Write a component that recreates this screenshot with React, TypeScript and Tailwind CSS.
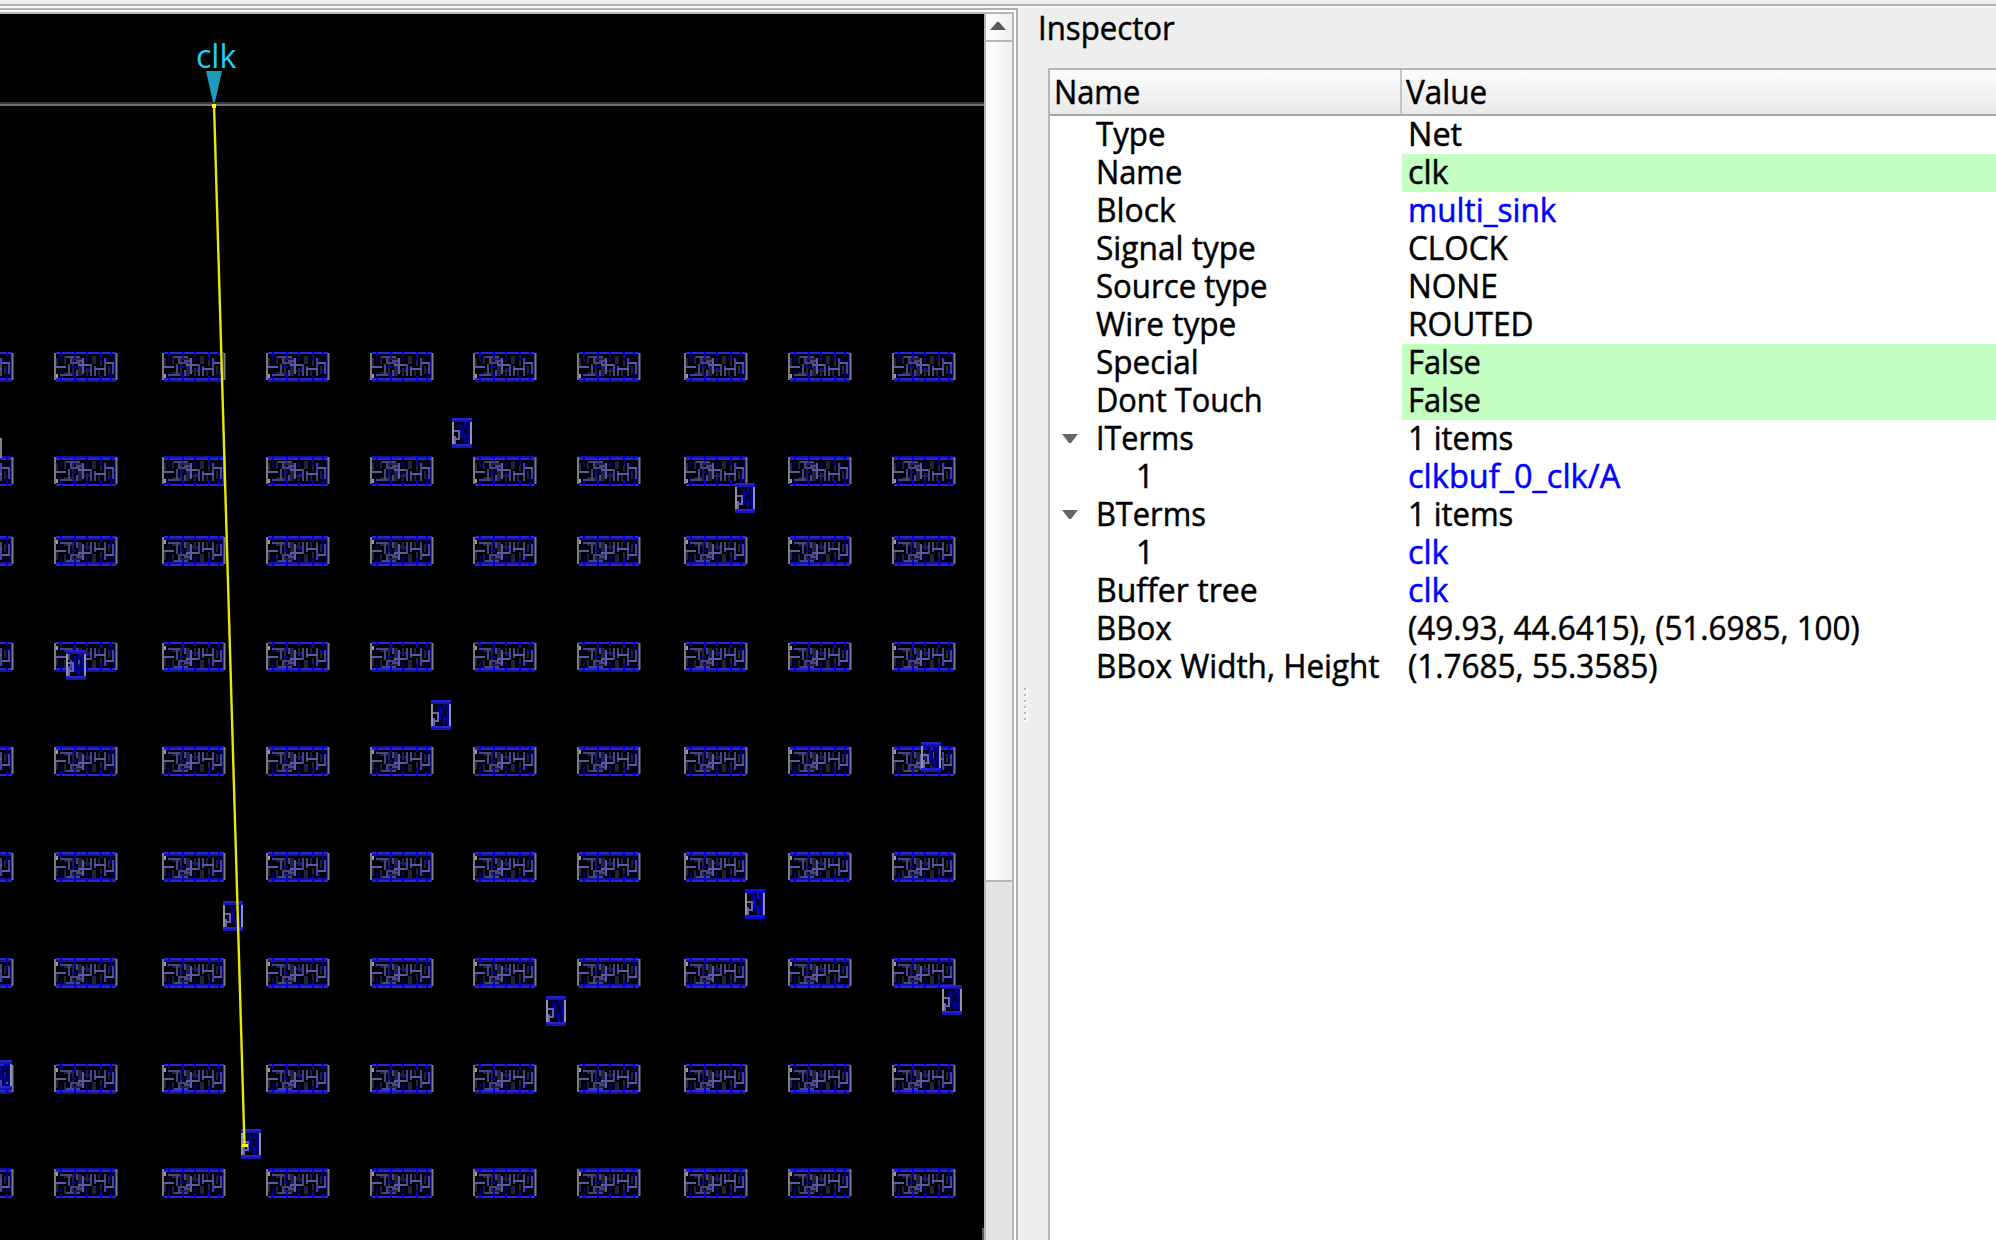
import { useLayoutEffect, useRef, useState } from "react";

type FitProps = { text: string; width: number; className?: string };

/** Single-line label condensed horizontally to a given width. */
function Fit({ text, width, className = "" }: FitProps) {
  const ref = useRef<HTMLSpanElement>(null);
  const [scale, setScale] = useState(1);
  useLayoutEffect(() => {
    if (ref.current) setScale(width / ref.current.offsetWidth);
  }, [width]);
  return (
    <span
      ref={ref}
      className={"inline-block origin-left whitespace-pre " + className}
      style={{ transform: `scaleX(${scale})` }}
    >
      {text}
    </span>
  );
}

type Row = {
  name: string;
  nw: number;
  value: string;
  vw: number;
  kind?: "edit" | "link";
  open?: boolean;
  child?: boolean;
};

const ROWS: Row[] = [
  { name: "Type", nw: 69, value: "Net", vw: 54 },
  { name: "Name", nw: 86, value: "clk", vw: 40, kind: "edit" },
  { name: "Block", nw: 80, value: "multi_sink", vw: 148, kind: "link" },
  { name: "Signal type", nw: 160, value: "CLOCK", vw: 100 },
  { name: "Source type", nw: 172, value: "NONE", vw: 90 },
  { name: "Wire type", nw: 140, value: "ROUTED", vw: 126 },
  { name: "Special", nw: 103, value: "False", vw: 73, kind: "edit" },
  { name: "Dont Touch", nw: 167, value: "False", vw: 73, kind: "edit" },
  { name: "ITerms", nw: 98, value: "1 items", vw: 105, open: true },
  { name: "1", nw: 18, value: "clkbuf_0_clk/A", vw: 212, kind: "link", child: true },
  { name: "BTerms", nw: 110, value: "1 items", vw: 105, open: true },
  { name: "1", nw: 18, value: "clk", vw: 40, kind: "link", child: true },
  { name: "Buffer tree", nw: 162, value: "clk", vw: 40, kind: "link" },
  { name: "BBox", nw: 76, value: "(49.93, 44.6415), (51.6985, 100)", vw: 452 },
  { name: "BBox Width, Height", nw: 284, value: "(1.7685, 55.3585)", vw: 249 },
];

const COLS = [-50, 54, 162, 266, 370, 473, 577, 684, 788, 892];

type CellRow = { y: number; flip: boolean; rails: "high" | "low" | "wide" };
const CELL_ROWS: CellRow[] = [
  { y: 352, flip: false, rails: "high" },
  { y: 456, flip: false, rails: "low" },
  { y: 536, flip: true, rails: "wide" },
  { y: 642, flip: true, rails: "high" },
  { y: 746, flip: true, rails: "low" },
  { y: 852, flip: true, rails: "wide" },
  { y: 958, flip: true, rails: "wide" },
  { y: 1064, flip: true, rails: "high" },
  { y: 1168, flip: true, rails: "low" },
];

const BRIGHT_RAIL = {
  high: "M1 .5h30M1 13.5h30",
  low: "M1 1.5h30M1 14.5h30",
  wide: "M1 .5h30M1 14.5h30",
};
const DIM_RAIL = {
  high: "M1 14.5h30",
  low: "M1 .5h30",
  wide: "M1 1.5h30M1 13.5h30",
};

const BUFFERS: { x: number; y: number; strong?: boolean }[] = [
  { x: 452, y: 418 },
  { x: 735, y: 483 },
  { x: 66, y: 650 },
  { x: 431, y: 700 },
  { x: 921, y: 742 },
  { x: 223, y: 901 },
  { x: 745, y: 889, strong: true },
  { x: 546, y: 996 },
  { x: 942, y: 985 },
  { x: 241, y: 1129 },
  { x: -8, y: 1060 },
];

function FlopWires() {
  return (
    <>
      <path
        stroke="#20203f"
        d="M1.5 3v4M9.5 2v10M5.5 2v4M13.5 4v8M12.5 5v7M19.5 2v4M20.5 2v4M16.5 8v4M27.5 7v4M5 10.5h6M23.5 3v4M15 9.5h3M22.5 9v3M8 3.5h6"
      />
      <path stroke="#00006e" d="M3.5 2v3M28.5 9v4M30.5 1v12M16.5 2v3M10.5 10v2M3.5 10v3M23.5 2v2M26.5 3v3" />
      <path
        stroke="#454588"
        d="M6 2.5h7M8.5 2v3M11 4.5h3M7.5 6v5M8 5.5h5M3 11.5h6M11.5 9v3M18.5 6v6M20.5 7v5M25.5 3v9M29.5 5v6"
      />
      <path stroke="#5a5aa8" d="M1 7.5h5M12 6.5h6M14.5 3v8M20 8.5h6M26 5.5h4" />
      <path stroke="#0000c8" d="M9 7.5h2M17 8.5h1" />
      <path stroke="#9a9a9a" d="M1.5 11v2" />
    </>
  );
}

function Flop({ x, row }: { x: number; row: CellRow }) {
  return (
    <g transform={`translate(${x} ${row.y}) scale(2)`} fill="none">
      <g transform={row.flip ? "translate(0 15) scale(1 -1)" : row.rails === "low" ? "translate(0 .5)" : undefined}>
        <FlopWires />
      </g>
      <path stroke="#16168c" d={DIM_RAIL[row.rails]} />
      <path stroke="#2626d6" d={BRIGHT_RAIL[row.rails]} />
      <path stroke="#7c7c7c" d="M.5 .5v13.5M31.25 .5v13.5" />
      <path stroke="#0000e0" d="M3.5 0v2M10.5 0v3M16.5 0v2M23.5 0v3M28.5 0v2M3.5 13v2M10.5 12v3M16.5 13v2M23.5 12v3M28.5 13v2" />
    </g>
  );
}

function Buffer({ x, y, strong }: { x: number; y: number; strong?: boolean }) {
  return (
    <g transform={`translate(${x} ${y}) scale(2)`} fill="none">
      <path stroke={strong ? "#0000e0" : "#00009c"} d="M4.5 3v6M6.5 1v4M6.5 8v6M8.5 2v11M4 9.5h4" />
      <path stroke="#00005a" d="M3.5 2v4M7.5 3v8M5.5 4v8" />
      <path stroke="#6464b0" d="M1 6.5h3M3.5 6v5M1 10.5h3M1.5 9v4" />
      <path stroke="#9494a0" d="M.5 1v13M9.5 1v13" />
      <path stroke={strong ? "#0c0cff" : "#2222d2"} d="M0 .5h10M0 13.5h10" />
      <path stroke={strong ? "#0606d0" : "#1616a8"} d="M0 1.5h10M0 14.5h10" />
    </g>
  );
}

function LayoutView() {
  return (
    <div className="relative w-[984px] shrink-0 overflow-hidden bg-black">
      <svg className="block" width="984" height="1226" viewBox="0 14 984 1226">
        <path stroke="#383838" strokeWidth="2" d="M0 103h984" />
        <path stroke="#6f6f6f" strokeWidth="2" d="M0 105h984" />
        {CELL_ROWS.map((row) => COLS.map((x) => <Flop key={`${x}-${row.y}`} x={x} row={row} />))}
        {BUFFERS.map((b) => (
          <Buffer key={`${b.x}-${b.y}`} {...b} />
        ))}
        <path fill="#808080" d="M0 438h2v20h-2z" />
        <path fill="#555566" d="M982 1228h2v12h-2z" />
        <path fill="#1c9cba" d="M206 71h16l-7 31h-2z" />
        <path stroke="#e8e800" strokeWidth="2.4" d="M214 104L244.5 1146" />
        <path fill="#ffff00" d="M212 104h4v4h-4zM242 1144h6v3h-6z" />
      </svg>
      <div className="absolute left-[196px] top-[20px] font-['Open_Sans',sans-serif] text-[32px] leading-[44px] text-[#1fd0f5]">
        <Fit text="clk" width={40} />
      </div>
    </div>
  );
}

function ScrollBar() {
  return (
    <div className="flex w-[30px] shrink-0 flex-col border-x-2 border-[#b6b6b6] bg-[#e4e4e4]">
      <div className="flex h-[28px] shrink-0 items-center justify-center border-b-2 border-[#b6b6b6] bg-linear-to-r from-white to-[#efefef] pb-[2px] pr-[2px]">
        <svg width="16" height="8" viewBox="0 0 16 8" fill="#5a5a5a">
          <path d="M7 0h2l7 8H0z" />
        </svg>
      </div>
      <div className="h-[840px] shrink-0 border-b-2 border-[#b6b6b6] bg-linear-to-r from-white to-[#f0f0f0]" />
    </div>
  );
}

function InspectorRow({ row }: { row: Row }) {
  const valueClass =
    row.kind === "edit" ? "bg-[#c3ffc0]" : row.kind === "link" ? "text-[#0000ff]" : "";
  return (
    <div className="flex h-[38px]">
      <div className="flex w-[352px] shrink-0 items-center pb-[2px]">
        <div className="flex w-[46px] shrink-0 items-center pl-[12px]">
          {row.open && (
            <svg width="16" height="9" viewBox="0 0 16 9" fill="#666666">
              <path d="M0 0h16L9 9H7z" />
            </svg>
          )}
        </div>
        <div className={row.child ? "pl-[40px]" : ""}>
          <Fit text={row.name} width={row.nw} />
        </div>
      </div>
      <div className={"flex grow items-center pb-[2px] pl-[6px] " + valueClass}>
        <Fit text={row.value} width={row.vw} />
      </div>
    </div>
  );
}

function Inspector() {
  return (
    <div className="flex min-w-0 grow flex-col font-['Open_Sans',sans-serif] text-[33px] leading-[36px] text-black [-webkit-text-stroke:0.5px]">
      <div className="flex h-[60px] shrink-0 pl-[20px] pt-[2px]">
        <Fit text="Inspector" width={137} />
      </div>
      <div className="flex min-h-0 grow">
        <div className="flex w-[30px] shrink-0 flex-col gap-[2px] pl-[6px] pt-[620px]">
          {[0, 1, 2, 3, 4, 5].map((i) => (
            <div key={i} className="h-[4px] w-[4px] shrink-0 bg-[#f8f8f8]">
              <div className="h-[2px] w-[2px] bg-[#b8b8b8]" />
            </div>
          ))}
        </div>
        <div className="flex min-w-0 grow flex-col border-l-2 border-t-2 border-[#b6b6b6] bg-white">
          <div className="flex h-[46px] shrink-0 border-b-2 border-[#a8a8a8] bg-linear-to-b from-[#fcfcfc] to-[#e9e9e9]">
            <div className="flex w-[352px] items-center border-r-2 border-[#c4c4c4] pl-[4px]">
              <Fit text="Name" width={86} />
            </div>
            <div className="flex items-center pl-[4px]">
              <Fit text="Value" width={81} />
            </div>
          </div>
          {ROWS.map((row, i) => (
            <InspectorRow key={i} row={row} />
          ))}
        </div>
      </div>
    </div>
  );
}

export default function App() {
  return (
    <div className="flex h-[1240px] w-[1996px] flex-col overflow-hidden bg-[#eeeeee]">
      <div className="h-[6px] shrink-0 border-b-2 border-[#b4b4b4]" />
      <div className="h-[2px] shrink-0 bg-[#f8f8f8]" />
      <div className="flex min-h-0 grow">
        <div className="flex w-[1018px] shrink-0 border-r-2 border-t-2 border-[#b0b0b0] bg-white pr-[2px] pt-[2px]">
          <div className="flex min-h-0 grow border-t-2 border-[#b6b6b6]">
            <LayoutView />
            <ScrollBar />
          </div>
        </div>
        <Inspector />
      </div>
    </div>
  );
}
